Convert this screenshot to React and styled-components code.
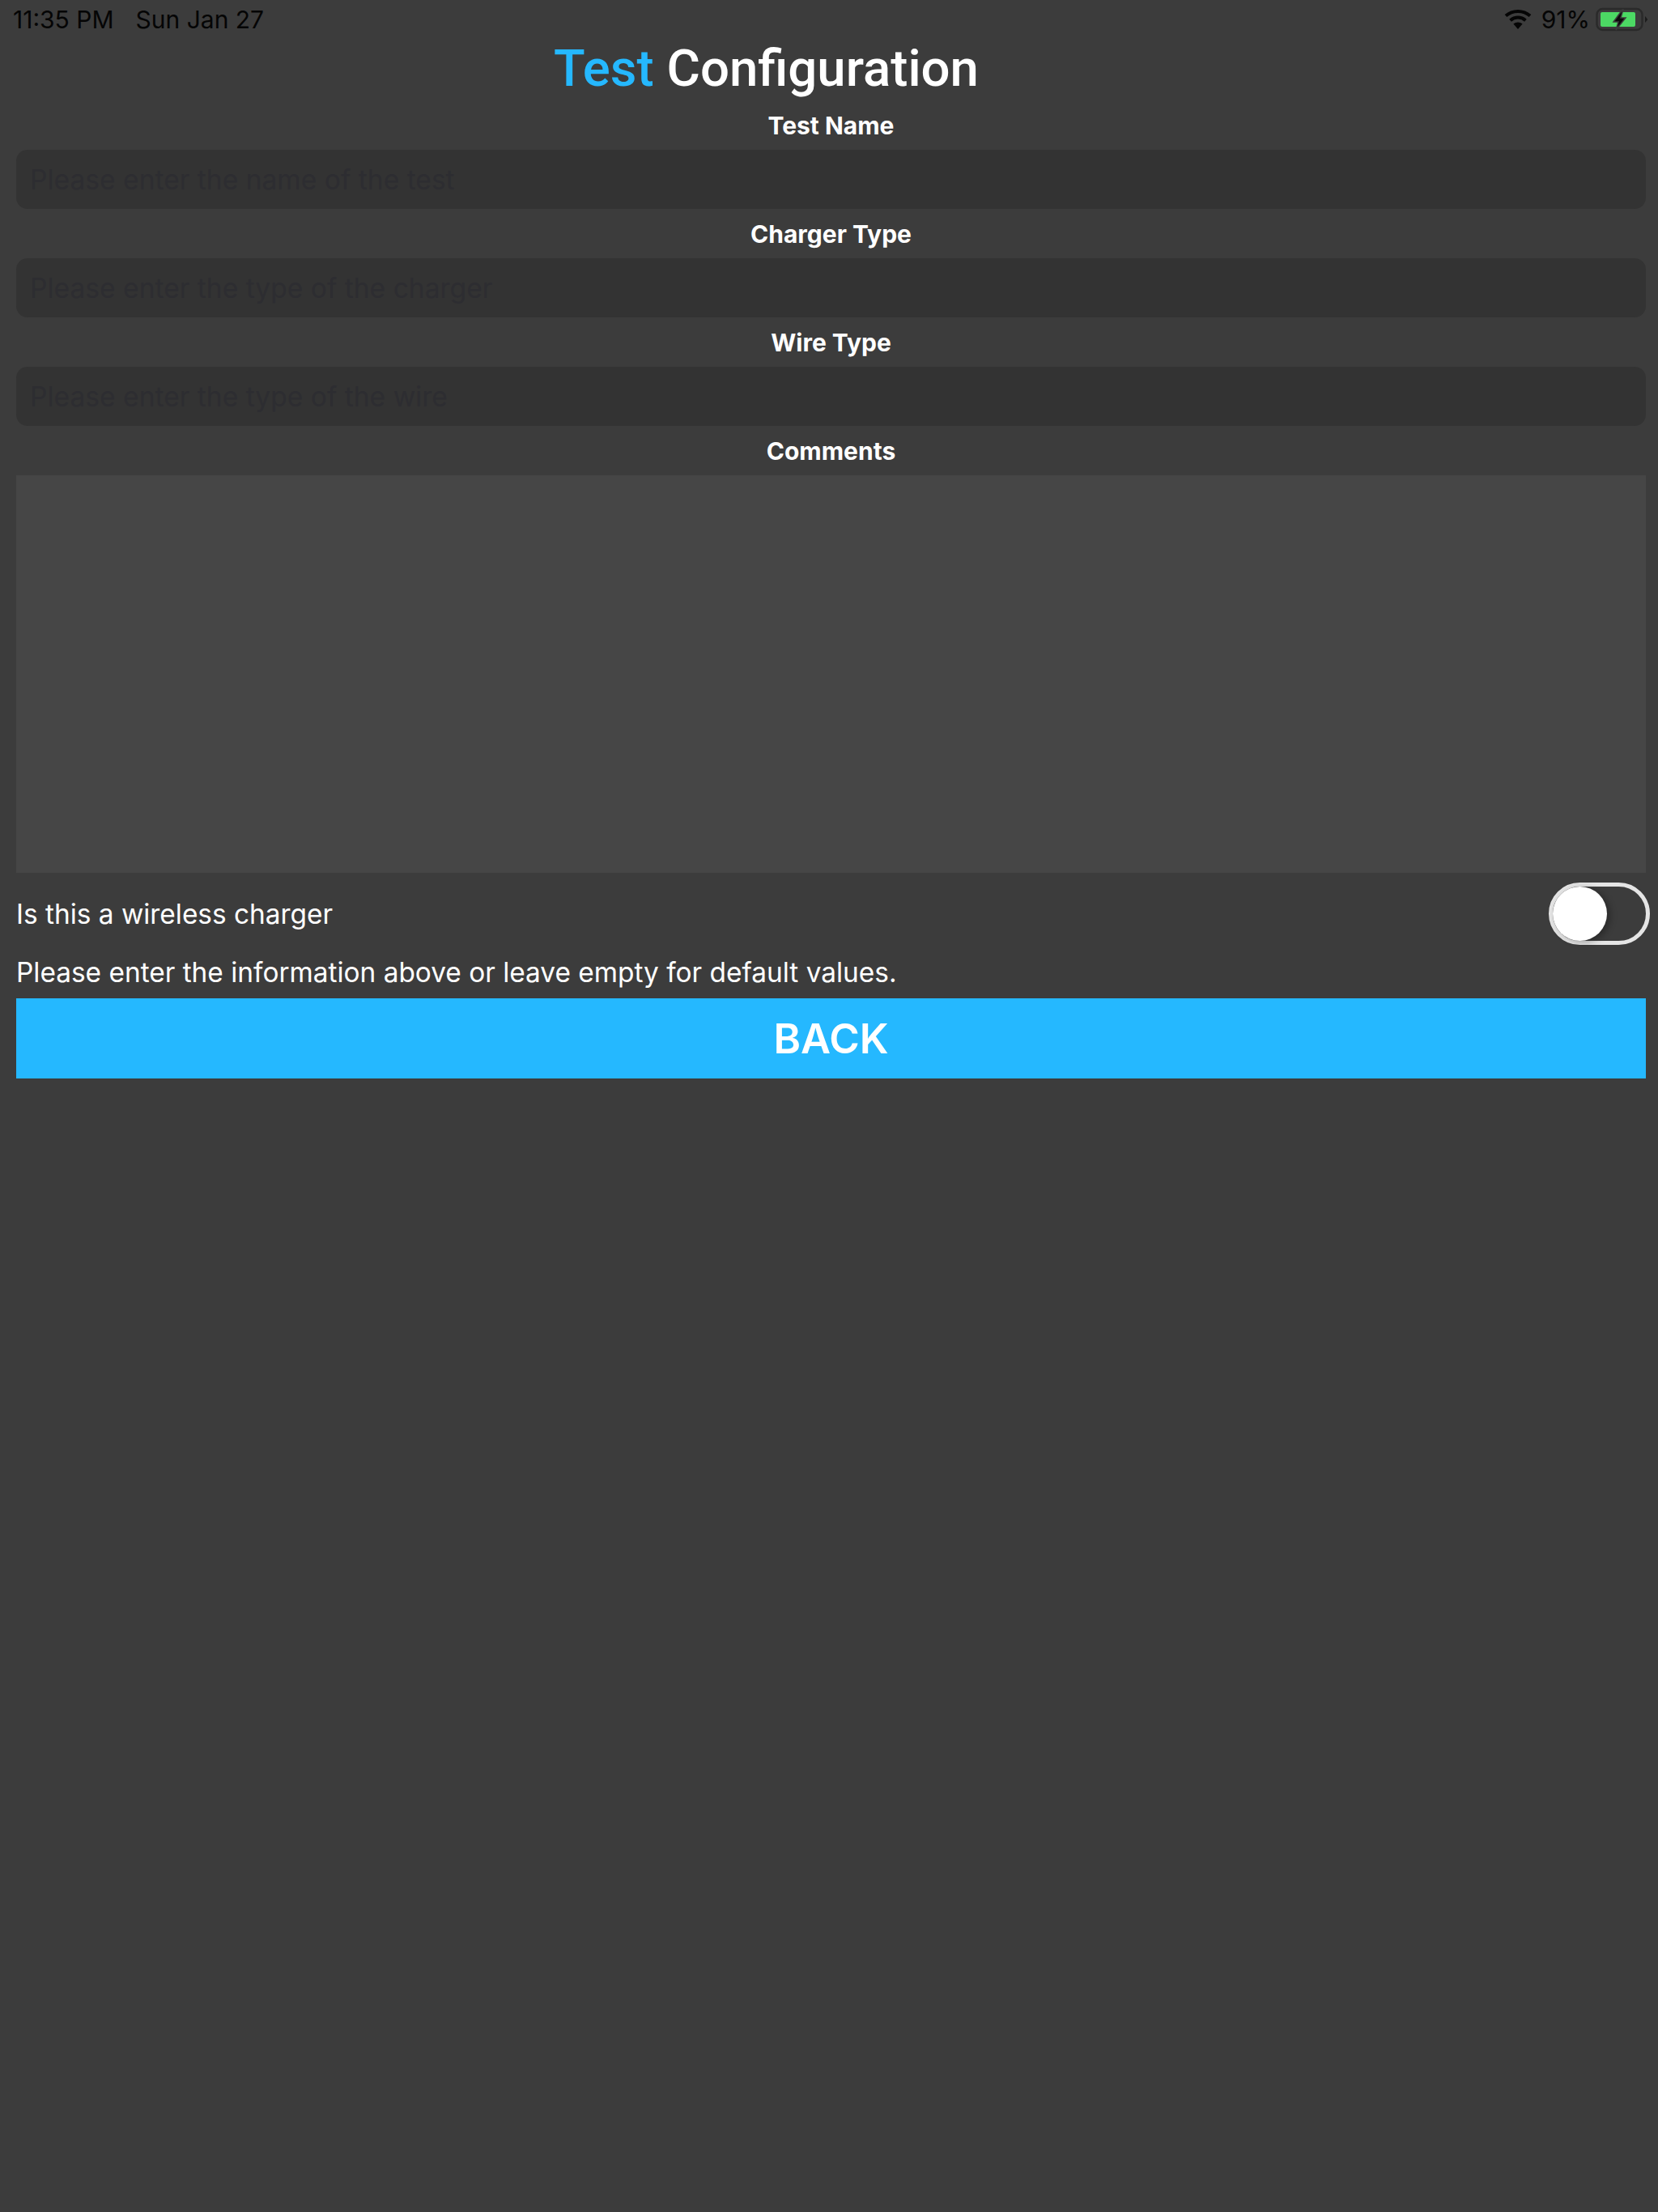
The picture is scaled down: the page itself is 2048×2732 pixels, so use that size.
import styled, { createGlobalStyle } from 'styled-components';

const GlobalStyle = createGlobalStyle`
  html, body {
    margin: 0;
    padding: 0;
    background: #3c3c3c;
  }
  * {
    box-sizing: border-box;
  }
`;

const FIELDS = [
  { label: 'Test Name', placeholder: 'Please enter the name of the test' },
  { label: 'Charger Type', placeholder: 'Please enter the type of the charger' },
  { label: 'Wire Type', placeholder: 'Please enter the type of the wire' },
];

const WifiIcon = () => (
  <svg width="34" height="26" viewBox="0 0 34 26">
    <g fill="none" stroke="#050505" strokeWidth="4">
      <path d="M2 8.6C10.4 1 23.6 1 32 8.6" />
      <path d="M7.6 14.2C13 9.4 21 9.4 26.4 14.2" />
    </g>
    <path d="M11.4 18.6C14.6 15.8 19.4 15.8 22.6 18.6L17 25Z" fill="#050505" />
  </svg>
);

const BatteryIcon = () => (
  <svg width="66" height="30" viewBox="0 0 66 30">
    <rect x="1.5" y="2" width="56" height="26" rx="7" fill="none" stroke="#2a2a2a" strokeWidth="2.5" />
    <rect x="6" y="6" width="43" height="18" rx="2" fill="#4cd964" />
    <path d="M61 11l3 3.5v1l-3 3.5z" fill="#1c1c1c" />
    <path d="M33 3L22 18h6l-3 10 12-15h-6l3-10z" fill="#0a0a0a" stroke="#3c3c3c" strokeWidth="1.5" />
  </svg>
);

const App = () => {
  return (
    <>
      <GlobalStyle />
      <Page>
        <StatusBar>
          <StatusText>11:35 PM</StatusText>
          <StatusDate>Sun Jan 27</StatusDate>
          <StatusRight>
            <WifiIcon />
            <StatusText>91%</StatusText>
            <BatteryIcon />
          </StatusRight>
        </StatusBar>

        <Title>
          <TitleAccent>Test</TitleAccent> Configuration
        </Title>

        <Form>
          {FIELDS.map((field) => (
            <Field key={field.label}>
              <FieldLabel>{field.label}</FieldLabel>
              <TextInput placeholder={field.placeholder} />
            </Field>
          ))}
          <Field>
            <FieldLabel>Comments</FieldLabel>
            <CommentsBox />
          </Field>

          <SwitchRow>
            <RowText>Is this a wireless charger</RowText>
            <SwitchTrack>
              <SwitchKnob />
            </SwitchTrack>
          </SwitchRow>

          <HelpText>Please enter the information above or leave empty for default values.</HelpText>
          <BackButton>BACK</BackButton>
        </Form>
      </Page>
    </>
  );
};

export default App;

const Page = styled.div`
  width: 2048px;
  height: 2732px;
  overflow: hidden;
  background: #3c3c3c;
  color: #fff;
  font-family: Inter, 'Liberation Sans', sans-serif;
`;

const StatusBar = styled.div`
  display: flex;
  align-items: center;
  height: 48px;
  padding: 0 11px 0 16px;
  color: #050505;
`;

const StatusText = styled.span`
  font-size: 30px;
  line-height: 48px;
`;

const StatusDate = styled(StatusText)`
  margin-left: 27px;
`;

const StatusRight = styled.div`
  display: flex;
  align-items: center;
  gap: 12px;
  margin-left: auto;

  svg:last-child {
    margin-left: -5px;
  }
`;

const Title = styled.h1`
  margin: 0;
  padding-right: 155px;
  height: 76px;
  text-align: center;
  font-family: Roboto, 'Liberation Sans', sans-serif;
  font-size: 63.5px;
  line-height: 74px;
  font-weight: 500;
  color: #fff;
`;

const TitleAccent = styled.span`
  color: #25b8ff;
`;

const Form = styled.div`
  display: flex;
  flex-direction: column;
  padding: 0 15px 0 20px;
`;

const Field = styled.div`
  display: flex;
  flex-direction: column;
`;

const FieldLabel = styled.label`
  height: 61px;
  padding-top: 9px;
  text-align: center;
  font-size: 30px;
  line-height: 44px;
  font-weight: 700;
  color: #fff;
`;

const TextInput = styled.input`
  width: 100%;
  height: 73px;
  padding: 0 17px;
  border: none;
  border-radius: 14px;
  outline: none;
  background: #333333;
  font-family: Inter, 'Liberation Sans', sans-serif;
  font-size: 33.6px;
  color: #fff;

  &::placeholder {
    color: #2d2d31;
    opacity: 1;
  }
`;

const CommentsBox = styled.textarea`
  display: block;
  width: 100%;
  height: 491px;
  border: none;
  outline: none;
  resize: none;
  background: #464646;
`;

const SwitchRow = styled.div`
  display: flex;
  align-items: center;
  justify-content: space-between;
  height: 77px;
  margin: 12px -5px 0 0;
`;

const RowText = styled.span`
  font-size: 33.4px;
  color: #fff;
`;

const SwitchTrack = styled.div`
  display: flex;
  align-items: center;
  width: 125px;
  height: 77px;
  border: 5px solid #e5e5e5;
  border-radius: 39px;
`;

const SwitchKnob = styled.div`
  width: 67px;
  height: 67px;
  border-radius: 50%;
  background: #fff;
  box-shadow: 4px 2px 8px rgba(0, 0, 0, 0.3);
`;

const HelpText = styled.div`
  height: 55px;
  margin-top: 11px;
  font-size: 33.4px;
  line-height: 46px;
  color: #fff;
`;

const BackButton = styled.button`
  width: 100%;
  height: 99px;
  padding: 0;
  border: none;
  background: #25b8ff;
  color: #fff;
  font-family: Inter, 'Liberation Sans', sans-serif;
  font-size: 51px;
  font-weight: 600;
`;
